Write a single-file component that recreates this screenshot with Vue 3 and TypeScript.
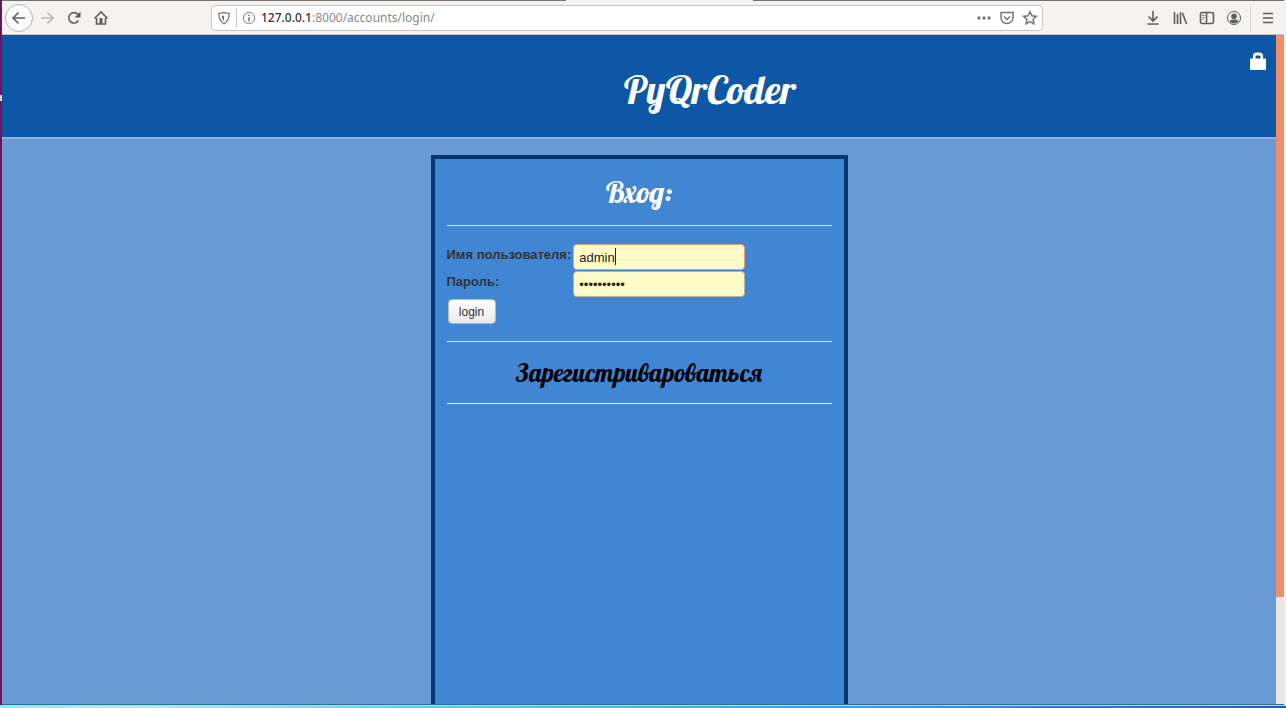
<script setup lang="ts">
import { ref } from 'vue'

const address = ref('127.0.0.1:8000/accounts/login/')
const username = ref('admin')
const password = ref('adminadmin')
</script>

<template>
  <div class="desktop">
    <div class="launcher"><span class="notch"></span></div>
    <div class="window">
      <div class="tabedge"><span class="activetab"></span></div>
      <nav class="toolbar" aria-label="Browser">
        <button class="tool back" aria-label="Back">
          <svg width="16" height="16" viewBox="0 0 16 16"><path d="M14 8H2M7.500 2.500L2 8l5.500 5.500" /></svg>
        </button>
        <button class="tool forward" aria-label="Forward">
          <svg width="16" height="16" viewBox="0 0 16 16"><path d="M2 8h12M8.500 2.500L14 8l-5.500 5.500" /></svg>
        </button>
        <button class="tool" aria-label="Reload">
          <svg width="16" height="16" viewBox="0 0 16 16"><path d="M12.500 10.500A5.200 5.200 0 1 1 12 4.500" /><path class="fill" d="M14.500 1.500v6h-6z" /></svg>
        </button>
        <button class="tool" aria-label="Home">
          <svg width="16" height="16" viewBox="0 0 16 16"><path d="M1.500 8.500L8 2l6.500 6.500M3.500 8v6h9V8" /><path class="fill" d="M6.500 8h3v6h-3z" /></svg>
        </button>
        <div class="address">
          <svg width="14" height="14" viewBox="0 0 16 16"><path d="M8 1.500c2 1 4 1.200 6 1.200 0 5.500-1.500 9.500-6 12-4.500-2.500-6-6.500-6-12 2 0 4-.2 6-1.200z" /><path d="M8 5c-1 .5-1.800.5-2.700.5.200 2.500.9 4.500 2.700 6z" class="fill" /></svg>
          <span class="split"></span>
          <svg width="14" height="14" viewBox="0 0 16 16" class="thin"><circle cx="8" cy="8" r="6.500" /><path class="mark" d="M8 7v5M8 4v1.600" /></svg>
          <label class="url">
            <input v-model="address" class="urlbox" type="text" aria-label="Address" />
            <span class="urltext" aria-hidden="true"><b>127.0.0.1</b>:8000/accounts/login/</span>
          </label>
          <div class="actions">
            <svg width="16" height="16" viewBox="0 0 16 16"><g class="fill"><circle cx="3" cy="8" r="1.700" /><circle cx="8" cy="8" r="1.700" /><circle cx="13" cy="8" r="1.700" /></g></svg>
            <svg width="16" height="16" viewBox="0 0 16 16"><path d="M2 2.500h12v5a6 6 0 0 1-12 0zM5 6.500l3 3 3-3" /></svg>
            <svg width="16" height="16" viewBox="0 0 16 16"><path d="M8 1.800l1.900 4 4.400.6-3.200 3 .8 4.400L8 11.700l-3.900 2.100.8-4.400-3.200-3 4.400-.6z" /></svg>
          </div>
        </div>
        <div class="tools">
          <button class="tool" aria-label="Downloads">
            <svg width="16" height="16" viewBox="0 0 16 16"><path d="M8 1v9.500M3.500 6.500L8 11l4.500-4.500M2.500 14h11" /></svg>
          </button>
          <button class="tool" aria-label="Library">
            <svg width="16" height="16" viewBox="0 0 16 16"><path d="M2.500 2v12M5.500 4v10M8.500 2v12M10.500 3l4 11" /></svg>
          </button>
          <button class="tool" aria-label="Sidebars">
            <svg width="16" height="16" viewBox="0 0 16 16"><rect x="1.500" y="2.500" width="13" height="11" rx="2" /><path d="M7.500 2.500v11" /><path class="hair" d="M3.500 5.500h2M3.500 7.500h2M3.500 9.500h1" /></svg>
          </button>
          <button class="tool" aria-label="Account">
            <svg width="16" height="16" viewBox="0 0 16 16"><circle class="hair" cx="8" cy="8" r="6.500" /><circle class="fill" cx="8" cy="6.300" r="2.800" /><path class="fill" d="M3.500 11c1-2 8-2 9 0a5.300 5.300 0 0 1-9 0z" /></svg>
          </button>
          <span class="divider"></span>
          <button class="tool" aria-label="Menu">
            <svg width="16" height="16" viewBox="0 0 16 16"><path d="M3 3.500h10M3 8h10M3 12.500h10" /></svg>
          </button>
        </div>
      </nav>
      <div class="viewport">
        <div class="page">
          <header class="head">
            <h1>PyQrCoder</h1>
            <a href="#" class="lock" aria-label="Login">
              <svg width="18" height="20" viewBox="0 0 18 20"><path fill="#fff" fill-rule="evenodd" d="M2 7.500h2V5q0-3.500 3.500-3.500h3Q14 1.500 14 5v2.500h2q1 0 1 1V18q0 1-1 1H2q-1 0-1-1V8.500q0-1 1-1zM6.500 7.500h5V5.500q0-1-1-1h-3q-1 0-1 1z" /></svg>
            </a>
          </header>
          <main class="panel">
            <h2>Вход:</h2>
            <form class="form" @submit.prevent>
              <table>
                <tbody>
                  <tr>
                    <th><label for="user">Имя пользователя:</label></th>
                    <td>
                      <div class="field">
                        <input id="user" v-model="username" class="active" type="text" />
                        <span class="caret"></span>
                      </div>
                    </td>
                  </tr>
                  <tr>
                    <th><label for="pass">Пароль:</label></th>
                    <td><div class="field"><input id="pass" v-model="password" type="password" /></div></td>
                  </tr>
                </tbody>
              </table>
              <button class="login" type="submit">login</button>
            </form>
            <h3><a href="#">Зарегистривароваться</a></h3>
          </main>
        </div>
        <div class="scrollbar"><div class="thumb"></div></div>
      </div>
    </div>
    <div class="rightedge"></div>
    <div class="taskbar"></div>
  </div>
</template>

<style>
body {
  margin: 0;
  overflow: hidden;
}
</style>

<style scoped>
* {
  box-sizing: border-box;
}
.desktop {
  display: grid;
  grid-template: minmax(0, 1fr) 3px / 2px minmax(0, 1fr) 2px;
  height: 100vh;
  font-family: "Liberation Sans", sans-serif;
}
.launcher {
  display: flex;
  align-items: flex-start;
  padding-top: 95px;
  background: #6b1658;
}
.notch {
  width: 2px;
  height: 6px;
  background: #d8d5d3;
}
.rightedge {
  background: #edf2f9;
}
.taskbar {
  grid-column: 1 / -1;
  border-top: 1px solid #9fe4f5;
  background: linear-gradient(90deg, #78f4ff 0%, #96faff 10%, #4bcfff 33%, #249cf8 70%, #0e62c4 100%);
}
.window {
  display: flex;
  flex-direction: column;
  min-width: 0;
}
.tabedge {
  display: flex;
  height: 1px;
  padding-left: 44%;
  background: #77716e;
}
.activetab {
  width: 26%;
  background: #f4f3f1;
}
.toolbar {
  display: flex;
  align-items: center;
  height: 34px;
  flex: none;
  padding: 0 3px;
  background: #f4f3f1;
  border-bottom: 1px solid #c4c1be;
}
svg {
  display: block;
  flex: none;
  fill: none;
  stroke: #5f5f5e;
  stroke-width: 1.6;
}
.fill {
  fill: #5f5f5e;
  stroke: none;
}
.hair {
  stroke-width: 1;
}
.tool {
  display: grid;
  place-items: center;
  width: 27px;
  height: 28px;
  padding: 0;
  border: 0;
  background: none;
}
.back {
  width: 28px;
  border: 1px solid #b5b3b1;
  border-radius: 50%;
  background: #fdfdfd;
}
.forward svg {
  stroke: #b9b8b6;
}
.address {
  display: flex;
  align-items: center;
  flex: 1;
  gap: 5px;
  height: 26px;
  min-width: 0;
  margin: 0 96px 0 97px;
  padding: 0 4px 0 5px;
  border: 1px solid #c8c5c2;
  border-radius: 4px;
  background: #fff;
}
.address svg {
  stroke: #777675;
  stroke-width: 1.5;
}
.address .thin {
  stroke-width: 1;
}
.address .mark {
  stroke-width: 1.8;
}
.address .fill {
  fill: #777675;
}
.actions {
  display: flex;
  gap: 7px;
}
.split {
  width: 1px;
  height: 18px;
  background: #c8c6c4;
}
.url {
  display: grid;
  flex: 1;
  min-width: 0;
  font: 12px/18px "Noto Sans", sans-serif;
}
.urlbox,
.urltext {
  grid-area: 1 / 1;
  font: inherit;
}
.urlbox {
  width: 100%;
  height: 18px;
  padding: 0;
  border: 0;
  outline: 0;
  background: none;
  color: transparent;
}
.urltext {
  color: #8a8988;
  pointer-events: none;
}
.urltext b {
  color: #333;
  font-weight: 500;
}
.tools {
  display: flex;
  align-items: center;
}
.divider {
  width: 1px;
  height: 28px;
  margin: 0 3px;
  background: #dddbd9;
}
.viewport {
  display: flex;
  flex: 1;
  min-height: 0;
  border-bottom: 1px solid #3c6b83;
}
.page {
  display: flex;
  flex-direction: column;
  flex: 1;
  overflow: hidden;
  background: #689bd4;
}
.scrollbar {
  width: 8px;
  background: #e6e6e6;
}
.thumb {
  height: 84%;
  background: #ef8f67;
}
.head {
  position: relative;
  flex: none;
  padding: 24px 0 18px 142px;
  border-bottom: 2px solid #8fb3dc;
  background: #0e57a6;
  text-align: center;
}
h1,
h2,
h3 {
  margin: 0;
  font-family: Lobster, "Liberation Serif", serif;
  font-weight: normal;
  text-align: center;
}
h1 {
  color: #fff;
  font-size: 40px;
  line-height: 60px;
}
.lock {
  position: absolute;
  top: 16px;
  right: 9px;
}
.lock svg {
  stroke: none;
}
.panel {
  flex: 1;
  width: 417px;
  margin: 16px auto 0;
  padding: 0 12px;
  border: 4px solid #04376f;
  border-bottom: 0;
  background: #4186d3;
}
h2 {
  height: 67px;
  border-bottom: 1px solid #d3e2f4;
  color: #fff;
  font-size: 30px;
  line-height: 67px;
}
.form {
  padding: 18px 0 17px;
  border-bottom: 1px solid #d3e2f4;
}
table {
  border-collapse: collapse;
}
th,
td {
  padding: 0;
  vertical-align: top;
}
th {
  padding-right: 2px;
  color: #333;
  font-size: 13px;
  line-height: 22px;
  text-align: left;
}
td {
  padding-bottom: 1px;
}
.field {
  position: relative;
}
.field input {
  display: block;
  width: 172px;
  height: 26px;
  padding: 0 5px;
  border: 1px solid #b9b49a;
  border-radius: 4px;
  outline: 0;
  background: #fffbc8;
  color: #222;
  font: 13px "Liberation Sans", sans-serif;
}
.field .active {
  border-color: #e3a276;
}
.caret {
  position: absolute;
  top: 4px;
  left: 42px;
  width: 1px;
  height: 17px;
  background: #222;
}
.login {
  display: block;
  width: 48px;
  height: 25px;
  margin: 1px 0 0 1px;
  padding: 0;
  border: 1px solid #b8b8b8;
  border-radius: 4px;
  background: linear-gradient(#fff, #e9e9e9);
  color: #333;
  font: 12px "Liberation Sans", sans-serif;
}
h3 {
  height: 62px;
  border-bottom: 1px solid #e6edf5;
  font-size: 25px;
  line-height: 62px;
}
h3 a {
  color: #000;
  text-decoration: none;
}
</style>
